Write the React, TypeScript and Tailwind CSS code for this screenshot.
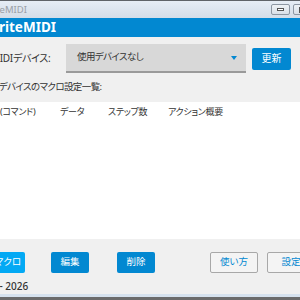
import React from 'react';

// WriteMIDI main window — window is wider than the viewport and shifted left (cropped screenshot)

const font = "font-['Noto_Sans','Noto_Sans_CJK_JP',sans-serif] [font-feature-settings:'palt']";

const columns = ['ノート(コマンド)', 'データ', 'ステップ数', 'アクション概要'];

export default function App() {
  return (
    <div className={`w-[300px] h-[300px] overflow-hidden bg-[#f0f0f0] ${font}`}>
      <div className="-ml-[40px] w-[380px] h-[300px] flex flex-col">
        {/* title bar */}
        <div className="h-[18px] border-t border-[#5f6368] bg-gradient-to-b from-[#e6edf5] to-[#d3dde8] flex items-center">
          <div className="ml-[3px] w-[14px] h-[14px] rounded-sm bg-[#0288d1]" />
          <span className="ml-[4px] text-[9.5px] leading-none text-[#9aa0a6]">WriteMIDI</span>
          <div className="ml-auto mr-[3px] flex items-center gap-[3px]">
            <div className="w-[19px] h-[11px] border border-[#8d97a3] rounded-[2px] bg-gradient-to-b from-[#eef2f6] to-[#d9e0e8] flex items-center justify-center">
              <div className="w-[7px] h-[3px] border border-[#555] bg-white" />
            </div>
            <div className="w-[19px] h-[11px] border border-[#8d97a3] rounded-[2px] bg-gradient-to-b from-[#eef2f6] to-[#d9e0e8] flex items-center justify-center">
              <div className="w-[8px] h-[6px] border border-[#555] bg-white" />
            </div>
            <div className="w-[22px] h-[11px] border border-[#8d97a3] rounded-[2px] bg-[#c9504a]" />
          </div>
        </div>

        {/* app header */}
        <div className="h-[19px] bg-[#0288d1] flex items-center pl-[26px]">
          <span className="text-white font-bold text-[13.5px] leading-none">WriteMIDI</span>
        </div>

        {/* device select */}
        <div className="mt-[7px] flex items-center">
          <span className="w-[106px] pl-[31px] text-[10px] tracking-[-0.3px] text-[#333]">MIDIデバイス:</span>
          <div className="w-[180px] h-[29px] bg-[#d8d8d8] border-b-2 border-[#9a9a9a] flex items-center pl-[11px] pr-[9px]">
            <span className="text-[9.5px] tracking-[-0.6px] text-[#333]">使用デバイスなし</span>
            <svg className="ml-auto" width="6" height="4" viewBox="0 0 6 4">
              <path d="M0 0h6L3 4z" fill="#0288d1" />
            </svg>
          </div>
          <button className="ml-[6px] w-[39px] h-[22px] rounded-[2px] bg-[#0288d1] text-white text-[10px]">
            更新
          </button>
        </div>

        <div className="mt-[7px] pl-[21px] text-[9.5px] tracking-[-0.6px] leading-[14px] text-[#333]">使用デバイスのマクロ設定一覧:</div>

        {/* macro table */}
        <div className="mt-[8px] h-[137px] bg-white">
          <div className="grid grid-cols-[82px_48px_60px_1fr] pl-[18px] pt-[3px] text-[9px] tracking-[-0.3px] leading-[14px] text-[#333]">
            {columns.map((c) => (
              <span key={c}>{c}</span>
            ))}
          </div>
        </div>

        {/* action buttons */}
        <div className="mt-[13px] flex items-center pl-[12px] text-[9.5px]">
          <button className="w-[53px] h-[21px] rounded-[2px] bg-[#03a9f4] text-white">新規マクロ</button>
          <button className="ml-[26px] w-[38px] h-[21px] rounded-[2px] bg-[#0288d1] text-white">編集</button>
          <button className="ml-[28px] w-[38px] h-[21px] rounded-[2px] bg-[#0288d1] text-white">削除</button>
          <button className="ml-[55px] w-[48px] h-[21px] rounded-[2px] bg-[#f4f4f4] border border-[#a8a8a8] text-[#0288d1]">
            使い方
          </button>
          <button className="ml-[9px] w-[48px] h-[21px] rounded-[2px] bg-[#f4f4f4] border border-[#a8a8a8] text-[#0288d1]">
            設定
          </button>
        </div>

        <div className="mt-[6px] pl-[9px] text-[10px] leading-[14px] font-medium text-[#333]">v1.0.0 - 2026</div>

        {/* bottom frame */}
        <div className="mt-auto h-[3px] bg-[#d6e2ee]" />
        <div className="h-[3px] bg-[#6b6b6b]" />
      </div>
    </div>
  );
}
